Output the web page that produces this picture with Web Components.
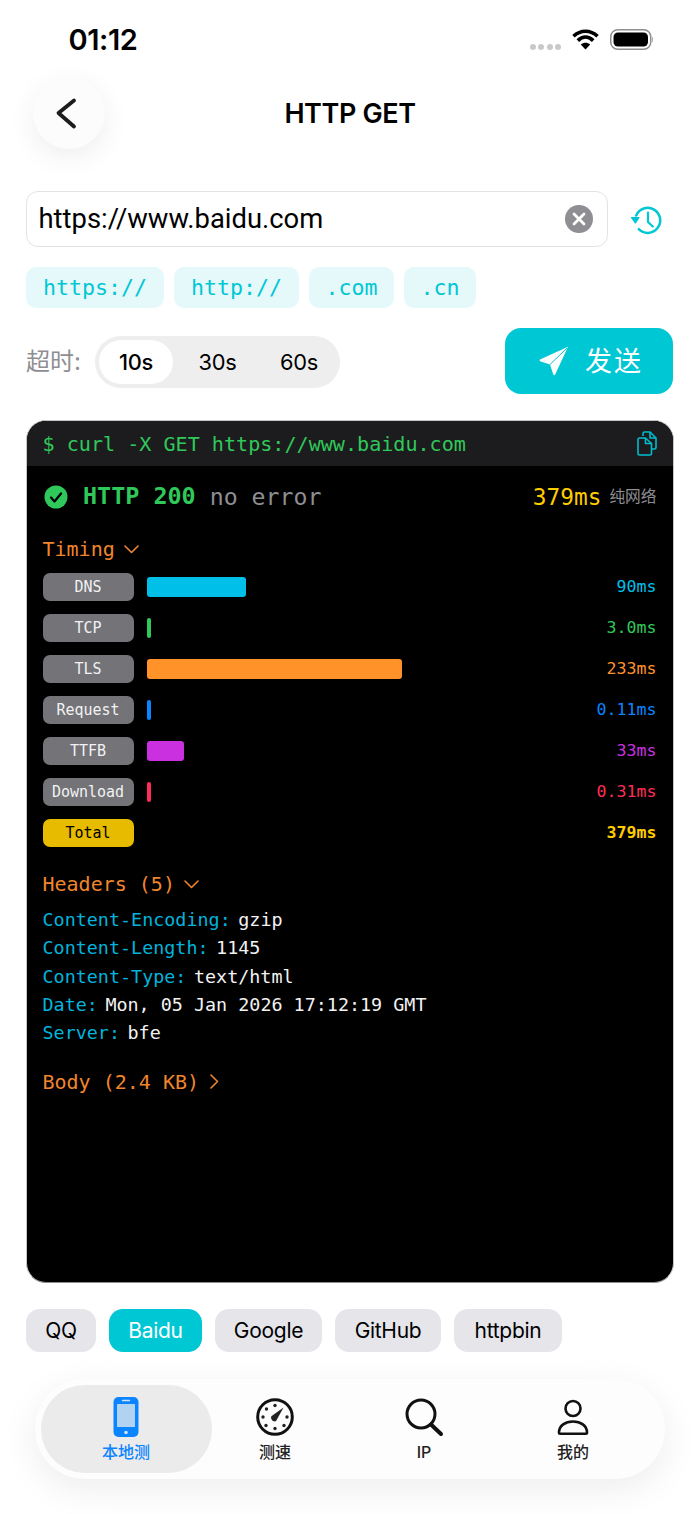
<!DOCTYPE html>
<html lang="zh">
<head>
<meta charset="utf-8">
<title>HTTP GET</title>
<style>
html,body{margin:0;padding:0;background:#fff}
body{font-family:Inter,"Noto Sans CJK SC",sans-serif;color:#000}
</style>
</head>
<body>
<app-screen>
  <status-bar></status-bar>
  <nav-header>HTTP GET</nav-header>
  <url-bar value="https://www.baidu.com"></url-bar>
  <chip-row>
    <quick-chip style="width:138px">https://</quick-chip>
    <quick-chip style="width:125px">http://</quick-chip>
    <quick-chip style="width:85px">.com</quick-chip>
    <quick-chip style="width:72px">.cn</quick-chip>
  </chip-row>
  <control-row></control-row>
  <term-panel>
    <term-timing label="DNS" bar="99" color="#00bfe8" value="90ms"></term-timing>
    <term-timing label="TCP" bar="4" color="#30c85a" value="3.0ms"></term-timing>
    <term-timing label="TLS" bar="255" color="#ff9228" value="233ms"></term-timing>
    <term-timing label="Request" bar="4" color="#0a84ff" value="0.11ms"></term-timing>
    <term-timing label="TTFB" bar="37" color="#ca30e0" value="33ms"></term-timing>
    <term-timing label="Download" bar="4" color="#ff2d55" value="0.31ms"></term-timing>
    <term-timing label="Total" color="#ffcc00" value="379ms" total></term-timing>
    <term-header slot="headers" name="Content-Encoding:" value="gzip"></term-header>
    <term-header slot="headers" name="Content-Length:" value="1145"></term-header>
    <term-header slot="headers" name="Content-Type:" value="text/html"></term-header>
    <term-header slot="headers" name="Date:" value="Mon, 05 Jan 2026 17:12:19 GMT"></term-header>
    <term-header slot="headers" name="Server:" value="bfe"></term-header>
  </term-panel>
  <preset-row>
    <preset-chip style="width:70px">QQ</preset-chip>
    <preset-chip style="width:93px" active>Baidu</preset-chip>
    <preset-chip style="width:107px">Google</preset-chip>
    <preset-chip style="width:106px">GitHub</preset-chip>
    <preset-chip style="width:108px">httpbin</preset-chip>
  </preset-row>
  <tab-bar></tab-bar>
</app-screen>
<script>
const SANS='Inter,"Noto Sans CJK SC",sans-serif';
const ROB='Roboto,"Noto Sans CJK SC",sans-serif';
const MONO='"DejaVu Sans Mono","Noto Sans CJK SC",monospace';
function def(name,html){
  customElements.define(name,class extends HTMLElement{
    connectedCallback(){
      if(this.shadowRoot)return;
      const r=this.attachShadow({mode:'open'});
      r.innerHTML=typeof html==='function'?html(this):html;
    }
  });
}
def('app-screen',`<style>
:host{display:flex;flex-direction:column;width:700px;height:1514px;overflow:hidden;box-sizing:border-box;background:#fff;position:relative}
</style><slot></slot>`);

def('status-bar',`<style>
:host{display:flex;align-items:center;height:77px;padding:3px 47px 0 68.500px;box-sizing:border-box;flex:none}
.t{font:600 29px/1 ${SANS};letter-spacing:-.4px;color:#000;flex:1;margin-top:-2px}
.dots{display:flex;gap:2.400px;margin:14px 11px 0 0}
.dots i{width:6px;height:6px;border-radius:50%;background:#c9c9c9}
svg{display:block}
.w{margin:-3px 11px 0 0}
.b{margin-top:-1px}
</style>
<div class="t">01:12</div>
<div class="dots"><i></i><i></i><i></i><i></i></div>
<svg class="w" width="27" height="22" viewBox="0 0 27 22"><path d="M1.500 8.200C8.500 1.500 18.500 1.500 25.500 8.200M5.800 12.600C10.500 8 16.500 8 21.200 12.600" fill="none" stroke="#000" stroke-width="3.600"/><path d="M13.500 21.500 8.800 16.600C11.600 14 15.400 14 18.200 16.600Z" fill="#000"/></svg>
<svg class="b" width="43" height="21" viewBox="0 0 43 21"><rect x=".75" y=".75" width="40" height="19.500" rx="7" fill="#fff" stroke="#8e8e8e" stroke-width="1.500"/><rect x="3.500" y="3.500" width="34.500" height="14" rx="4.500" fill="#000"/><path d="M42 7.500c1 .5 1 5.500 0 6z" fill="#8e8e8e"/></svg>`);

def('nav-header',`<style>
:host{display:flex;align-items:center;height:72px;padding-left:33px;position:relative;flex:none}
.back{width:72px;height:72px;border-radius:50%;background:#fcfcfc;box-shadow:0 8px 28px rgba(0,0,0,.07);display:flex;align-items:center;justify-content:center}
.title{position:absolute;left:0;right:0;text-align:center;font:600 27px/1 ${SANS};letter-spacing:-.4px;color:#000}
</style>
<div class="back"><svg width="72" height="72" viewBox="0 0 72 72"><path d="M41 23.500 25.500 36 41 49.500" fill="none" stroke="#1c1c1e" stroke-width="3.800" stroke-linecap="round" stroke-linejoin="round"/></svg></div>
<div class="title"><slot></slot></div>`);

def('url-bar',h=>`<style>
:host{display:flex;align-items:center;margin:42px 26px 0;height:56px;flex:none}
.box{width:582px;height:56px;box-sizing:border-box;border:1px solid #e3e3e6;border-radius:12px;display:flex;align-items:center;padding:0 14px 0 11.500px;background:#fff}
.v{flex:1;font:400 27.400px/1 ${ROB};color:#000;margin-top:1px}
svg{display:block}
.h{margin-left:21px}
</style>
<div class="box"><span class="v">${h.getAttribute('value')}</span>
<svg width="28" height="28" viewBox="0 0 28 28"><circle cx="14" cy="14" r="14" fill="#8e8e93"/><path d="M9 9l10 10M19 9 9 19" stroke="#fff" stroke-width="2.800" stroke-linecap="round"/></svg></div>
<svg class="h" width="34" height="34" viewBox="0 0 34 34"><path d="M7.200 13.500A12.500 12.500 0 1 1 9.800 27.200" fill="none" stroke="#00c7d4" stroke-width="2.500" stroke-linecap="round"/><path d="M2.200 15.500h8l-3.800 5.800z" fill="#00c7d4" stroke="#00c7d4" stroke-width="1" stroke-linejoin="round"/><path d="M19 10.500V20l4.800 4.500" fill="none" stroke="#00c7d4" stroke-width="2.200" stroke-linecap="round" stroke-linejoin="round"/></svg>`);

def('chip-row',`<style>:host{display:flex;gap:10px;margin:20px 26px 0;height:41px;flex:none}</style><slot></slot>`);
def('quick-chip',`<style>
:host{display:flex;align-items:center;justify-content:center;height:41px;border-radius:10px;background:#e5f8fa;color:#00c7d4;font:400 21.600px/1 ${MONO}}
</style><slot></slot>`);

def('control-row',`<style>
:host{display:flex;align-items:center;margin:20px 27px 0 26px;height:66px;flex:none}
.lab{font:400 24px/1 ${SANS};color:#8e8e93;width:69px;white-space:nowrap;margin-top:1px}
.seg{display:flex;align-items:center;width:245px;height:52px;box-sizing:border-box;padding:4px;border-radius:26px;background:#eeeeee;margin-top:2px}
.o{height:44px;box-sizing:border-box;padding-top:1px;display:flex;align-items:center;justify-content:center;font:400 21.800px/1 ${SANS};letter-spacing:-.3px;color:#000;border-radius:22px}
.o.on{background:#fff;width:74px;font-weight:500}
.o.a{width:89px}.o.b{width:74px}
.send{margin-left:auto;width:168px;height:66px;box-sizing:border-box;padding-left:4px;border-radius:16px;background:#00c7d4;display:flex;align-items:center;justify-content:center;gap:16px;color:#fff;font:400 27px/1 ${SANS};letter-spacing:2px}
svg{display:block}
</style>
<span class="lab">超时:</span>
<div class="seg"><div class="o on">10s</div><div class="o a">30s</div><div class="o b">60s</div></div>
<div class="send"><svg width="30" height="30" viewBox="0 0 30 30"><path d="M29 .8 1.500 13.300c-1.400.7-1.200 1.800.2 2.200l9.300 3 3.200 9.700c.5 1.400 1.500 1.400 2.100 0z" fill="#fff"/><path d="M28 2 11 18.500" stroke="#00c7d4" stroke-width="1"/></svg><span>发送</span></div>`);

def('term-panel',`<style>
:host{display:flex;flex-direction:column;margin:26px 26px 0;height:863px;width:648px;box-sizing:border-box;flex:none;border:1.500px solid #c6c6c8;border-bottom-color:#8e8e90;border-radius:20px;background:#000;overflow:hidden;font-family:${MONO}}
.bar{height:44.500px;box-sizing:border-box;padding:1px 16px 0 15.500px;flex:none;background:#1c1c1e;display:flex;align-items:center;justify-content:space-between;color:#30c85a;font:400 20.100px/1 ${MONO};white-space:nowrap}
.body{padding:16.500px 16.500px 0 15.500px;display:flex;flex-direction:column;flex:1}
svg{display:block}
.st{display:flex;align-items:center;height:30px}
.code{font:700 23.400px/1 ${MONO};color:#30c85a;margin-left:15px}
.no{font:400 23.200px/1 ${MONO};color:#8e8e93;margin-left:14px;flex:1}
.ms{font:400 22.800px/1 ${MONO};color:#ffcc00}
.net{font:400 15.700px/1 ${SANS};color:#8e8e93;margin-left:8px}
.sec{display:flex;align-items:center;height:24px;gap:9px;color:#f0852d;font:400 20px/1 ${MONO};white-space:pre}
.rows{display:flex;flex-direction:column;gap:13px;margin-top:12px}
.hs{margin-top:10px;display:flex;flex-direction:column}
</style>
<div class="bar"><span>$ curl -X GET https://www.baidu.com</span>
<svg width="20" height="25" viewBox="0 0 20 25" fill="none" stroke="#00bccf" stroke-width="1.600" stroke-linejoin="round"><path d="M6 5V2.500A1.500 1.500 0 0 1 7.500 1H13l6 6v9.500A1.500 1.500 0 0 1 17.500 18H15"/><path d="M13 1v6h6"/><path d="M2.500 7H8.500l6 5.500v10A1.500 1.500 0 0 1 13 24H2.500A1.500 1.500 0 0 1 1 22.500v-14A1.500 1.500 0 0 1 2.500 7z"/><path d="M8.500 7v5.500h6"/></svg></div>
<div class="body">
<div class="st"><svg width="24" height="24" viewBox="0 0 24 24" style="margin-left:1.500px"><circle cx="12" cy="12" r="11.500" fill="#30c85a"/><path d="M7 12.500l3.500 4L17 8.500" fill="none" stroke="#000" stroke-width="2.300" stroke-linecap="round" stroke-linejoin="round"/></svg><span class="code">HTTP 200</span><span class="no">no error</span><span class="ms">379ms</span><span class="net">纯网络</span></div>
<div class="sec" style="margin-top:25px">Timing<svg width="15" height="9" viewBox="0 0 15 9"><path d="M1 1l6.500 6.500L14 1" fill="none" stroke="#f0852d" stroke-width="1.600" stroke-linecap="round" stroke-linejoin="round"/></svg></div>
<div class="rows"><slot></slot></div>
<div class="sec" style="margin-top:25px">Headers (5)<svg width="15" height="9" viewBox="0 0 15 9"><path d="M1 1l6.500 6.500L14 1" fill="none" stroke="#f0852d" stroke-width="1.600" stroke-linecap="round" stroke-linejoin="round"/></svg></div>
<div class="hs"><slot name="headers"></slot></div>
<div class="sec" style="margin-top:22.500px">Body (2.4 KB)<svg width="9" height="15" viewBox="0 0 9 15" style="margin-left:2px"><path d="M1 1l6.500 6.500L1 14" fill="none" stroke="#f0852d" stroke-width="1.600" stroke-linecap="round" stroke-linejoin="round"/></svg></div>
</div>`);

def('term-timing',h=>{
  const total=h.hasAttribute('total');
  const c=h.getAttribute('color');
  return `<style>
:host{display:flex;align-items:center;height:28px}
.l{width:91px;height:28px;box-sizing:border-box;padding-top:1px;border-radius:7px;flex:none;display:flex;align-items:center;justify-content:center;font:400 15px/1 ${MONO};background:${total?'#e6bb00':'#737378'};color:${total?'#000':'#f2f2f2'}}
.t{flex:1;margin-left:13px;height:20px;display:flex}
.b{height:20px;border-radius:${(+h.getAttribute('bar')||0)<8?2:3}px;background:${c};width:${h.getAttribute('bar')||0}px}
.v{color:${c};padding-top:1px;font:${total?700:400} 16.600px/1 ${MONO}}
</style><div class="l">${h.getAttribute('label')}</div><div class="t">${total?'':'<div class="b"></div>'}</div><div class="v">${h.getAttribute('value')}</div>`;
});

def('term-header',h=>`<style>
:host{display:flex;gap:7.500px;height:28.300px;align-items:center;font:400 18.400px/1 ${MONO};white-space:pre}
.n{color:#00b4dc}.v{color:#f2f2f2}
</style><span class="n">${h.getAttribute('name')}</span><span class="v">${h.getAttribute('value')}</span>`);

def('preset-row',`<style>:host{display:flex;gap:13px;margin:26px 26px 0;height:43px;flex:none}</style><slot></slot>`);
def('preset-chip',h=>{const a=h.hasAttribute('active');return `<style>
:host{display:flex;align-items:center;justify-content:center;height:43px;border-radius:14px;background:${a?'#00c7d4':'#e5e5ea'};color:${a?'#fff':'#000'};font:400 21px/1 ${SANS};letter-spacing:-.3px}
</style><slot></slot>`});

const TABS=[
 ['本地测',true,`<svg width="26" height="40" viewBox="0 0 26 40"><rect x=".5" width="25" height="40" rx="5" fill="#0a84ff"/><rect x="4" y="7" width="18" height="23" rx=".5" fill="#b2d2f2"/><path d="M9.500 3.500h7" stroke="#cfe4fa" stroke-width="1.400" stroke-linecap="round"/><circle cx="13" cy="35.500" r="1.800" fill="#cfe4fa"/></svg>`],
 ['测速',false,`<svg width="40" height="40" viewBox="0 0 40 40"><circle cx="20" cy="20" r="17.300" fill="none" stroke="#111" stroke-width="3"/><g fill="#222"><circle cx="20" cy="8.500" r="1.700"/><circle cx="11.500" cy="12" r="1.700"/><circle cx="8" cy="20" r="1.700"/><circle cx="11" cy="28.500" r="1.700"/><circle cx="20" cy="31.500" r="1.700"/><circle cx="29" cy="28.500" r="1.700"/><circle cx="32" cy="20" r="1.700"/></g><path d="M28.500 10.500 16.300 19.200a3.600 3.600 0 0 0 4.800 4.800z" fill="#222"/></svg>`],
 ['IP',false,`<svg width="40" height="40" viewBox="0 0 40 40"><circle cx="17" cy="17" r="14" fill="none" stroke="#111" stroke-width="3"/><path d="M27 27.500 37 37" stroke="#111" stroke-width="4" stroke-linecap="round"/></svg>`],
 ['我的',false,`<svg width="40" height="40" viewBox="0 0 40 40"><circle cx="20" cy="11.500" r="7.500" fill="none" stroke="#111" stroke-width="2.600"/><path d="M6 35.500c0-7 6.500-11 14-11s14 4 14 11c0 .8-.5 1.200-1.200 1.200H7.200C6.500 36.700 6 36.300 6 35.500z" fill="none" stroke="#111" stroke-width="2.600"/></svg>`]
];
def('tab-bar',`<style>
:host{display:flex;margin:27px 35px 0;height:100px;padding-left:16.500px;border-radius:50px;background:#fdfdfd;box-shadow:0 10px 36px rgba(0,0,0,.075);flex:none;box-sizing:border-box}
</style>${TABS.map(t=>`<tab-item ${t[1]?'active':''} label="${t[0]}">${t[2]}</tab-item>`).join('')}`);
def('tab-item',h=>{const a=h.hasAttribute('active');return `<style>
:host{display:flex;flex-direction:column;align-items:center;width:149px;padding-top:18px;box-sizing:border-box;position:relative;z-index:0}
${a?`:host::before{content:"";position:absolute;z-index:-1;left:-10.500px;right:-11.500px;top:6px;bottom:6px;border-radius:44px;background:#ebebeb}`:''}
.ic{height:40px;display:flex;align-items:center;justify-content:center}
.l{margin-top:7px;font:500 16px/1.100 ${SANS};color:${a?'#0a84ff':'#222'}}
</style><div class="ic"><slot></slot></div><div class="l">${h.getAttribute('label')}</div>`});
</script>
</body>
</html>
